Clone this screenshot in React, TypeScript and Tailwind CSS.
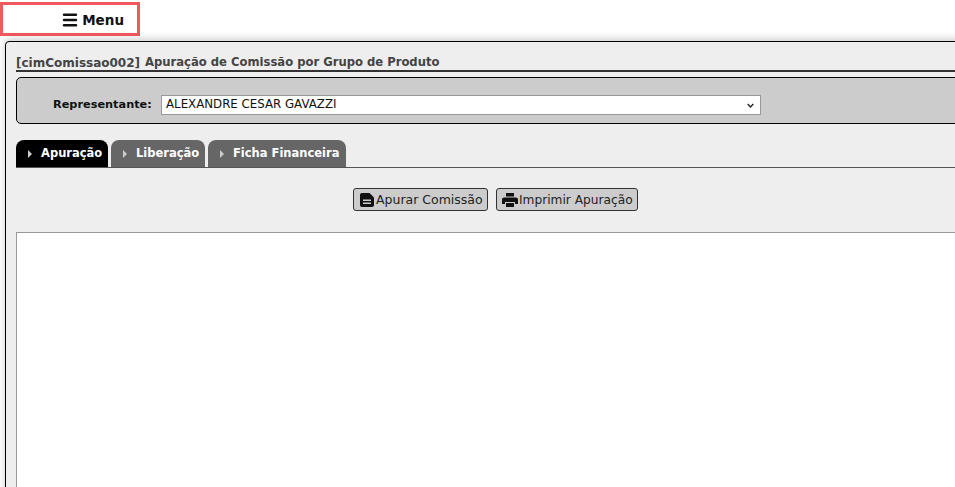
import { Menu } from "lucide-react";

const tabs = [
  { name: "Apuração", active: true, width: "w-[92px]" },
  { name: "Liberação", active: false, width: "w-[94px]" },
  { name: "Ficha Financeira", active: false, width: "w-[138px]" },
];

function DocIcon() {
  return (
    <svg viewBox="0 0 14 14" className="mr-[2px] h-[14px] w-[14px] shrink-0" fill="#111">
      <path d="M2 0h7.500L14 4.500V12a2 2 0 0 1-2 2H2a2 2 0 0 1-2-2V2a2 2 0 0 1 2-2z" />
      <path d="M3 6.500h8v1.500H3zM3 9.500h8V11H3z" fill="#ccc" />
    </svg>
  );
}

function PrinterIcon() {
  return (
    <svg viewBox="0 0 16 14" className="mr-px h-[14px] w-[16px] shrink-0" fill="#111">
      <path d="M4 0h8v3.500H4z" />
      <path d="M2 4.500h12a2 2 0 0 1 2 2V11h-3V9H3v2H0V6.500a2 2 0 0 1 2-2z" />
      <path d="M4 10h8v4H4z" />
    </svg>
  );
}

export default function App() {
  return (
    <div className="h-[487px] w-[955px] overflow-hidden bg-white font-['DejaVu_Sans',Verdana,sans-serif]">
      <div className="mt-[2px] flex h-[34px] w-[140px] items-center justify-end gap-[3px] border-[3px] border-[#f2595e] pr-[13px] pt-[2px] text-[13.5px] font-bold text-[#111]">
        <Menu size={18} strokeWidth={3.2} />
        <span>Menu</span>
      </div>

      <div className="ml-[5px] mt-[5px] h-[600px] w-[1000px] rounded-tl-[4px] border border-black bg-[#eeeeee] pl-[10px] pt-[11px] shadow-[0_-2px_8px_rgba(0,0,0,0.2)]">
        <div className="flex h-[19px] items-center gap-[5px] border-b-2 border-[#333] pt-[3px] font-bold text-[#444]">
          <span className="text-[12px]">[cimComissao002]</span>
          <span className="text-[11.6px]">Apuração de Comissão por Grupo de Produto</span>
        </div>

        <div className="mt-[5px] flex h-[47px] items-center rounded-[5px] border border-black bg-[#cccccc] pl-[36px] pt-[8px]">
          <span className="w-[108px] pt-[2px] text-[11.3px] font-bold text-[#111]">Representante:</span>
          <div className="flex h-[20px] w-[600px] items-center justify-between border border-[#999] bg-white pl-[4px] pr-[6px] pt-[1px] text-[11.8px] text-[#111]">
            <span>ALEXANDRE CESAR GAVAZZI</span>
            <svg viewBox="0 0 10 6" className="h-[5px] w-[7px]" fill="none" stroke="#222" strokeWidth="2">
              <path d="M1 1l4 4 4-4" />
            </svg>
          </div>
        </div>

        <div className="mt-[16px] flex h-[28px] gap-[3px] border-b border-[#555]">
          {tabs.map((t) => (
            <div
              key={t.name}
              className={`flex h-[27px] items-center gap-[9px] rounded-t-[8px] pl-[12px] pt-[1px] text-[11.5px] font-bold text-white ${t.width} ${t.active ? "bg-black" : "bg-[#666666]"}`}
            >
              <svg viewBox="0 0 4 8" className="h-[8px] w-[4px] shrink-0" fill="#ccc">
                <path d="M0 0l4 4-4 4z" />
              </svg>
              <span>{t.name}</span>
            </div>
          ))}
        </div>

        <div className="ml-[337px] mt-[20px] flex h-[23px] gap-[8px]">
          <button className="flex h-[23px] w-[135px] items-center rounded-[3px] border border-[#333] bg-[#cccccc] pl-[6px] text-[12.5px] text-[#222]">
            <DocIcon />
            <span className="pt-[1px]">Apurar Comissão</span>
          </button>
          <button className="flex h-[23px] w-[142px] items-center rounded-[3px] border border-[#333] bg-[#cccccc] pl-[5px] text-[12.2px] text-[#222]">
            <PrinterIcon />
            <span className="pt-[1px]">Imprimir Apuração</span>
          </button>
        </div>

        <div className="mt-[21px] h-[400px] border border-[#999] bg-white" />
      </div>
    </div>
  );
}
